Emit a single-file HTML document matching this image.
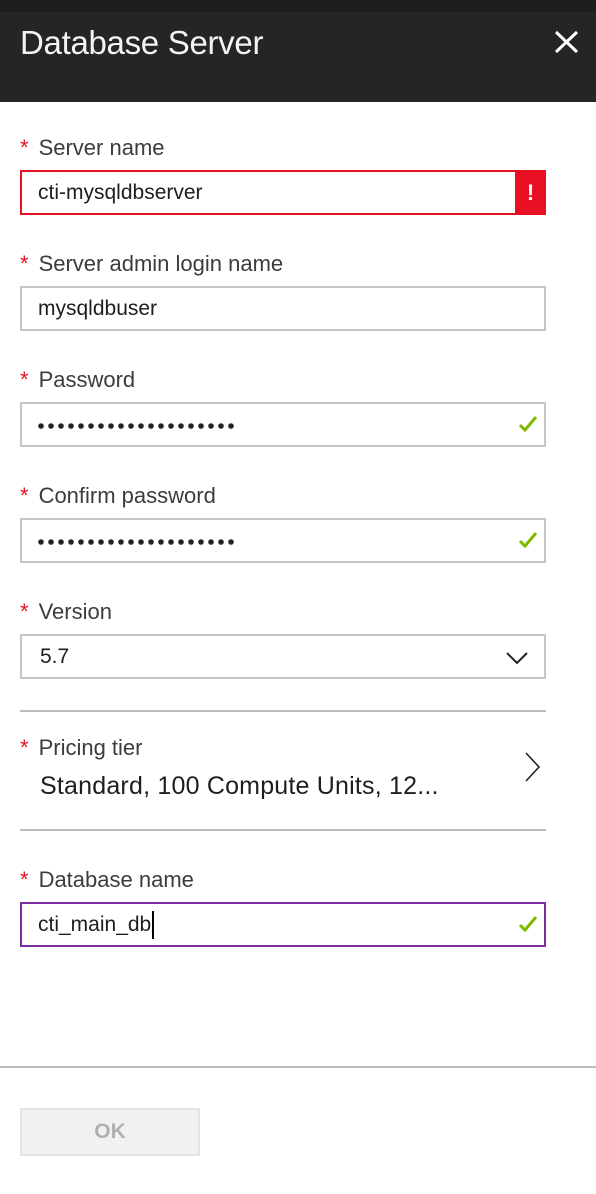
<!DOCTYPE html>
<html><head><meta charset="utf-8"><style>
*{margin:0;padding:0;box-sizing:border-box}
body{width:596px;height:1194px;background:#fff;position:relative;overflow:hidden;font-family:"Liberation Sans",sans-serif}
.top{position:absolute;left:0;top:0;width:596px;height:12px;background:#1e1e1e}
.hdr{position:absolute;left:0;top:12px;width:596px;height:90px;background:#252525}
.title{position:absolute;left:20px;top:24px;color:#f4f4f4;font-size:33px;font-weight:normal;letter-spacing:-0.3px}
.lbl{position:absolute;left:20px;font-size:22px;color:#3c3c3c;line-height:26px;letter-spacing:0px}
.lbl b{color:#e81123;font-weight:normal;margin-right:10px;font-size:22px}
.box{position:absolute;left:20px;width:526px;height:45px;border:2px solid #c6c6c6;font-size:21px;color:#1e1e1e;padding-left:16px;line-height:41px}
.chk{position:absolute;right:6px;top:11px}
.hr{position:absolute;left:20px;width:526px;height:2px;background:#bdbdbd}
</style></head><body>
<div class="top"></div>
<div class="hdr"></div>
<div class="title">Database Server</div>
<svg style="position:absolute;left:554px;top:30px" width="25" height="24"><path d="M2 2L23 22M23 2L2 22" stroke="#fff" stroke-width="3"/></svg>

<div class="lbl" style="top:135px"><b>*</b>Server name</div>
<div class="box" style="top:170px;border-color:#e81123;">cti-mysqldbserver<div style="position:absolute;right:-2px;top:-2px;width:31px;height:45px;background:#e81123;color:#fff;text-align:center;font-weight:bold;font-size:22px;line-height:45px">!</div></div>

<div class="lbl" style="top:251px"><b>*</b>Server admin login name</div>
<div class="box" style="top:286px">mysqldbuser</div>

<div class="lbl" style="top:367px"><b>*</b>Password</div>
<div class="box" style="top:402px"><svg style="position:absolute;left:16px;top:18px" width="200" height="8"><g fill="#222"><circle cx="3" cy="4" r="2.8"/><circle cx="13" cy="4" r="2.8"/><circle cx="23" cy="4" r="2.8"/><circle cx="33" cy="4" r="2.8"/><circle cx="43" cy="4" r="2.8"/><circle cx="53" cy="4" r="2.8"/><circle cx="63" cy="4" r="2.8"/><circle cx="73" cy="4" r="2.8"/><circle cx="83" cy="4" r="2.8"/><circle cx="93" cy="4" r="2.8"/><circle cx="103" cy="4" r="2.8"/><circle cx="113" cy="4" r="2.8"/><circle cx="123" cy="4" r="2.8"/><circle cx="133" cy="4" r="2.8"/><circle cx="143" cy="4" r="2.8"/><circle cx="153" cy="4" r="2.8"/><circle cx="163" cy="4" r="2.8"/><circle cx="173" cy="4" r="2.8"/><circle cx="183" cy="4" r="2.8"/><circle cx="193" cy="4" r="2.8"/></g></svg><svg class="chk" width="20" height="18"><path d="M2 10L7 15L18 2" stroke="#7fba00" stroke-width="3" fill="none"/></svg></div>

<div class="lbl" style="top:483px"><b>*</b>Confirm password</div>
<div class="box" style="top:518px"><svg style="position:absolute;left:16px;top:18px" width="200" height="8"><g fill="#222"><circle cx="3" cy="4" r="2.8"/><circle cx="13" cy="4" r="2.8"/><circle cx="23" cy="4" r="2.8"/><circle cx="33" cy="4" r="2.8"/><circle cx="43" cy="4" r="2.8"/><circle cx="53" cy="4" r="2.8"/><circle cx="63" cy="4" r="2.8"/><circle cx="73" cy="4" r="2.8"/><circle cx="83" cy="4" r="2.8"/><circle cx="93" cy="4" r="2.8"/><circle cx="103" cy="4" r="2.8"/><circle cx="113" cy="4" r="2.8"/><circle cx="123" cy="4" r="2.8"/><circle cx="133" cy="4" r="2.8"/><circle cx="143" cy="4" r="2.8"/><circle cx="153" cy="4" r="2.8"/><circle cx="163" cy="4" r="2.8"/><circle cx="173" cy="4" r="2.8"/><circle cx="183" cy="4" r="2.8"/><circle cx="193" cy="4" r="2.8"/></g></svg><svg class="chk" width="20" height="18"><path d="M2 10L7 15L18 2" stroke="#7fba00" stroke-width="3" fill="none"/></svg></div>

<div class="lbl" style="top:599px"><b>*</b>Version</div>
<div class="box" style="top:634px;padding-left:18px">5.7<svg style="position:absolute;right:16px;top:16px" width="22" height="13"><path d="M1 1L11 11L21 1" stroke="#222" stroke-width="2" fill="none"/></svg></div>

<div class="hr" style="top:710px"></div>
<div class="lbl" style="top:735px"><b>*</b>Pricing tier</div>
<div style="position:absolute;left:40px;top:772px;font-size:25px;color:#1e1e1e;letter-spacing:0.2px">Standard, 100 Compute Units, 12...</div>
<svg style="position:absolute;left:524px;top:752px" width="18" height="30"><path d="M2 1L15 15L2 29" stroke="#222" stroke-width="1.6" fill="none"/></svg>
<div class="hr" style="top:829px"></div>

<div class="lbl" style="top:867px"><b>*</b>Database name</div>
<div class="box" style="top:902px;border-color:#7b2f9e">cti_main_db<span style="display:inline-block;width:2px;height:28px;background:#000;vertical-align:middle;margin-left:1px"></span><svg class="chk" width="20" height="18"><path d="M2 10L7 15L18 2" stroke="#7fba00" stroke-width="3" fill="none"/></svg></div>

<div style="position:absolute;left:0;top:1066px;width:596px;height:2px;background:#bdbdbd"></div>
<div style="position:absolute;left:20px;top:1108px;width:180px;height:48px;background:#f1f1f1;border:2px solid #e4e4e4;color:#b0b0b0;font-weight:bold;font-size:21px;text-align:center;line-height:44px">OK</div>
</body></html>
